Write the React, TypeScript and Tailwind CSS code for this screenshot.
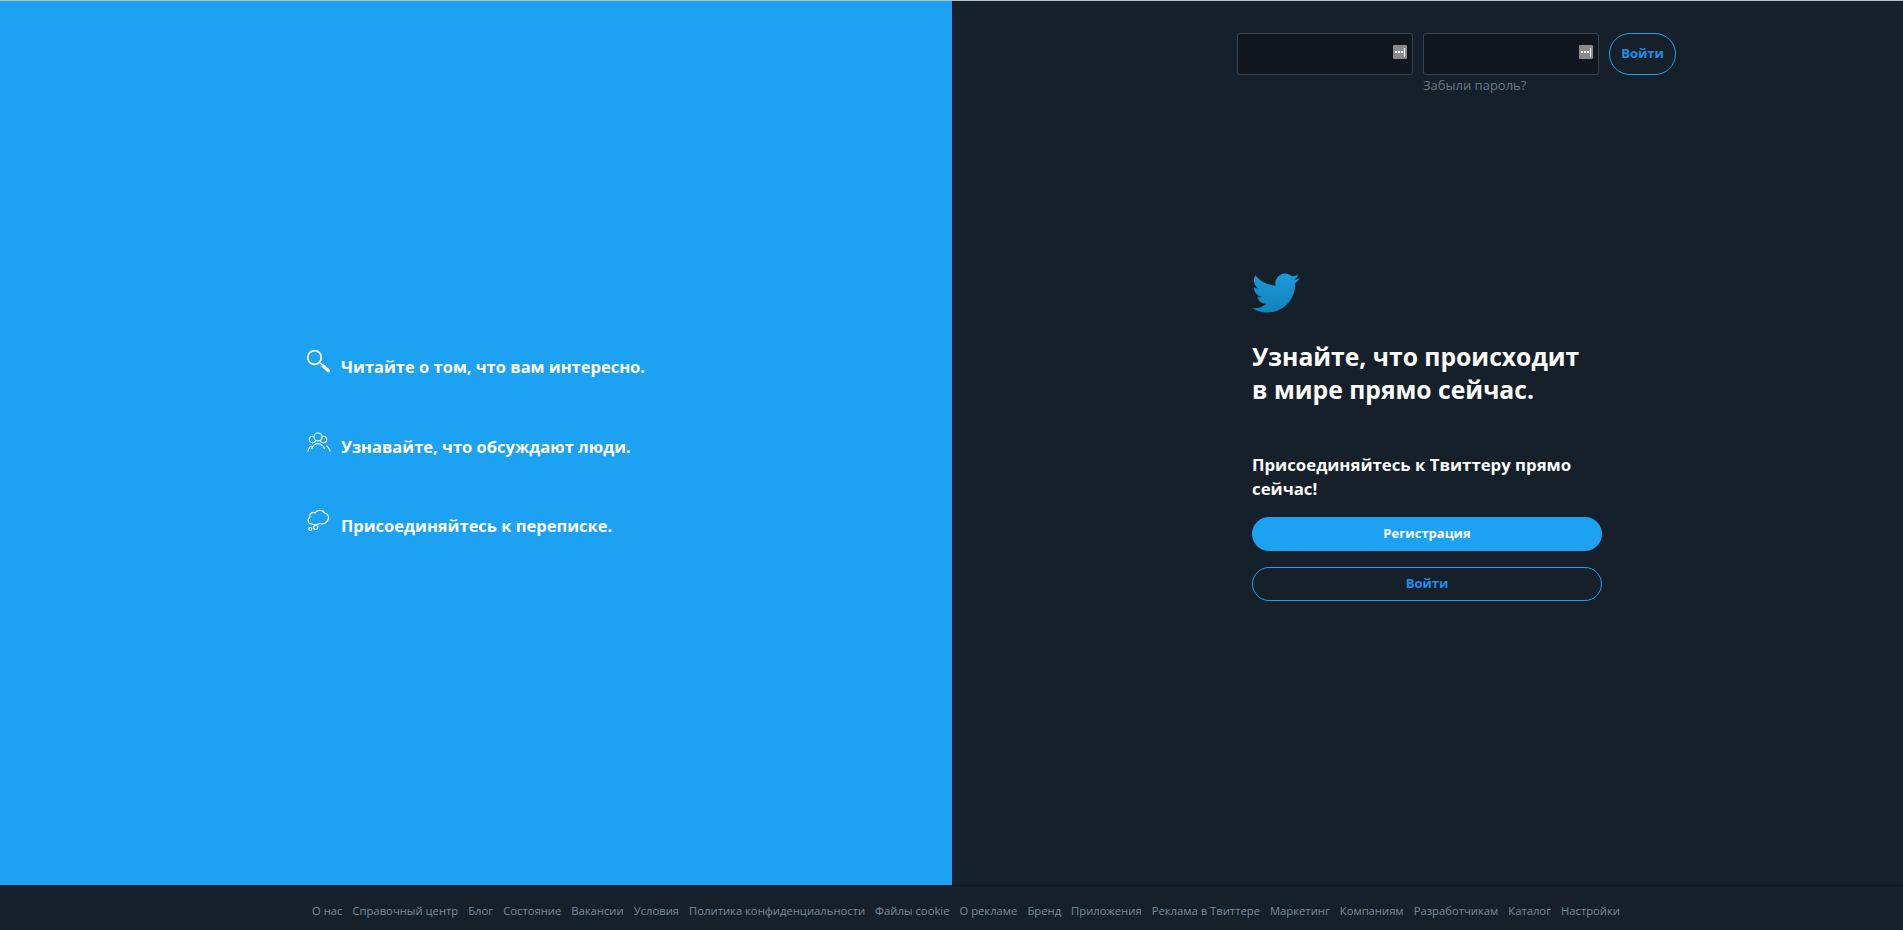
const footerLinks = [
  "О нас",
  "Справочный центр",
  "Блог",
  "Состояние",
  "Вакансии",
  "Условия",
  "Политика конфиденциальности",
  "Файлы cookie",
  "О рекламе",
  "Бренд",
  "Приложения",
  "Реклама в Твиттере",
  "Маркетинг",
  "Компаниям",
  "Разработчикам",
  "Каталог",
  "Настройки",
];

function SearchIcon() {
  return (
    <svg viewBox="0 0 26 26" className="h-[26px] w-[26px] shrink-0" fill="none" stroke="white">
      <circle cx="8.500" cy="8.500" r="6.800" strokeWidth="1.800" />
      <path d="M13.500 13.500l3.500 3" strokeWidth="1.300" />
      <path d="M17 17l5.500 4.800" strokeWidth="3.200" strokeLinecap="round" />
    </svg>
  );
}

function PeopleIcon() {
  return (
    <svg viewBox="0 0 26 26" className="h-[26px] w-[26px] shrink-0" fill="none" stroke="white" strokeWidth="1.100">
      <circle cx="6.500" cy="10.500" r="3.200" />
      <circle cx="17.500" cy="10.500" r="3.200" />
      <circle cx="12" cy="8" r="4" fill="#1da1f2" />
      <path d="M5.500 20c1.200-3.500 3.500-5.300 6.500-5.300s5.300 1.800 6.500 5.300" />
      <path d="M1.800 22.500c.7-2.900 2-4.800 4.200-5.700M24.200 22.500c-.7-2.900-2-4.800-4.200-5.700" />
    </svg>
  );
}

function CloudIcon() {
  return (
    <svg viewBox="0 0 26 26" className="h-[26px] w-[26px] shrink-0" fill="none" stroke="white" strokeWidth="1.100">
      <path d="M6 15C2 15.500.8 10 4 8 3 4 7 2.500 9 4c2-3.500 8-3.500 9.500 0 3.500.5 5.500 5 3 7.500-1 3-5 4-7.500 3-3 1.500-6 1.500-8 .5z" />
      <circle cx="4.300" cy="20" r="1.500" />
      <circle cx="9.700" cy="18.300" r="2.100" />
    </svg>
  );
}

function KeyBadge() {
  return (
    <div className="absolute right-[5px] top-[11px] flex h-[14px] w-[14px] items-center justify-center gap-[1px] rounded-[1px] bg-[#8a8a8a]">
      <span className="h-[2px] w-[2px] bg-white" />
      <span className="h-[2px] w-[2px] bg-white" />
      <span className="h-[2px] w-[2px] bg-white" />
      <span className="h-[9px] w-[1px] bg-white" />
    </div>
  );
}

function LoginInput() {
  return (
    <div className="relative h-[42px] w-[176px] rounded-[3px] border border-[#38444d] bg-[#10171e]">
      <KeyBadge />
    </div>
  );
}

export default function App() {
  return (
    <div
      className="flex h-[930px] w-full flex-col overflow-hidden bg-[#15202b] text-white"
      style={{ fontFamily: '"Open Sans", "Noto Sans", sans-serif' }}
    >
      <div className="h-px w-full bg-[#b9c0c5]" />
      <div className="flex h-[884px]">
        {/* Left panel */}
        <div className="flex w-[952px] flex-col gap-[53px] bg-[#1da1f2] pl-[306px] pt-[348px]">
          <div className="flex h-[27px] items-start gap-[9px]">
            <SearchIcon />
            <span className="mt-[4px] text-[16.5px] leading-[27px] font-bold">Читайте о том, что вам интересно.</span>
          </div>
          <div className="flex h-[27px] items-start gap-[9px]">
            <PeopleIcon />
            <span className="mt-[4px] text-[16.5px] leading-[27px] font-bold">Узнавайте, что обсуждают люди.</span>
          </div>
          <div className="flex h-[27px] items-start gap-[9px]">
            <CloudIcon />
            <span className="mt-[3px] text-[16.5px] leading-[27px] font-bold">Присоединяйтесь к переписке.</span>
          </div>
        </div>

        {/* Right panel */}
        <div className="flex flex-1 flex-col pl-[285px]">
          <div className="mt-[32px] flex items-start gap-[10px]">
            <LoginInput />
            <div>
              <LoginInput />
              <div className="mt-[1px] text-[13px] leading-[19px] text-[#657786]">Забыли пароль?</div>
            </div>
            <button className="h-[42px] w-[67px] rounded-full border border-[#1da1f2] text-[13px] font-bold text-[#1d8fe8]">
              Войти
            </button>
          </div>

          <div className="ml-[15px] mt-[174px] w-[350px]">
            <svg viewBox="0 0 24 24" className="h-[48px] w-[48px]">
              <defs>
                <linearGradient id="birdFill" x1="0" y1="0" x2="0" y2="1">
                  <stop offset="0%" stopColor="#1e9ad9" />
                  <stop offset="100%" stopColor="#1183bb" />
                </linearGradient>
              </defs>
              <path
                fill="url(#birdFill)"
                d="M23.953 4.57a10 10 0 01-2.825.775 4.958 4.958 0 002.163-2.723c-.951.555-2.005.959-3.127 1.184a4.92 4.92 0 00-8.384 4.482C7.69 8.095 4.067 6.13 1.64 3.162a4.822 4.822 0 00-.666 2.475c0 1.71.87 3.213 2.188 4.096a4.904 4.904 0 01-2.228-.616v.06a4.923 4.923 0 003.946 4.827 4.996 4.996 0 01-2.212.085 4.936 4.936 0 004.604 3.417 9.867 9.867 0 01-6.102 2.105c-.39 0-.779-.023-1.17-.067a13.995 13.995 0 007.557 2.209c9.053 0 13.998-7.496 13.998-13.985 0-.21 0-.42-.015-.63A9.935 9.935 0 0024 4.59z"
              />
            </svg>
            <h1 className="mt-[23px] text-[24.7px] leading-[33px] font-bold">
              Узнайте, что происходит
              <br />в мире прямо сейчас.
            </h1>
            <p className="mt-[47px] text-[16.8px] leading-[24px] font-bold">Присоединяйтесь к Твиттеру прямо сейчас!</p>
            <button className="mt-[16px] block h-[34px] w-full rounded-full bg-[#1da1f2] text-[13px] font-bold text-white">
              Регистрация
            </button>
            <button className="mt-[16px] block h-[34px] w-full rounded-full border border-[#1da1f2] text-[13px] font-bold text-[#1d8fe8]">
              Войти
            </button>
          </div>
        </div>
      </div>

      {/* Footer */}
      <footer className="flex h-[45px] items-center justify-center gap-[10px] border-t border-[#10171e] pl-[29px] pt-[5px]">
        {footerLinks.map((link) => (
          <a key={link} className="text-[11.25px] leading-[18px] text-[#7b8a97]">
            {link}
          </a>
        ))}
      </footer>
    </div>
  );
}
